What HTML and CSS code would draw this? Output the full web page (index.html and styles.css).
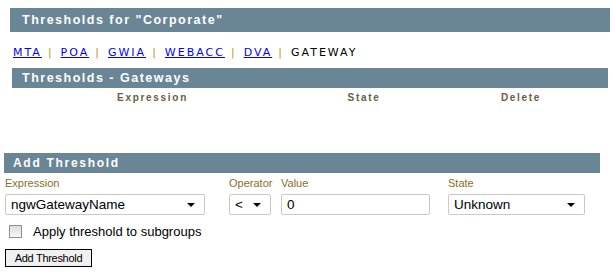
FILE: index.html
```html
<!DOCTYPE html>
<html lang="en">
<head>
  <meta charset="UTF-8" />
  <title>Thresholds</title>
  <link rel="stylesheet" href="styles.css">
</head>
<body>
  <div class="bar title">Thresholds for "Corporate"</div>

  <div class="tabs">
    <a href="#">MTA</a><span class="sep">|</span><a href="#">POA</a><span class="sep">|</span><a href="#">GWIA</a><span class="sep">|</span><a href="#">WEBACC</a><span class="sep">|</span><a href="#">DVA</a><span class="sep">|</span><span class="current">GATEWAY</span>
  </div>

  <div class="bar sub">Thresholds - Gateways</div>
  <div class="cols">
    <span>Expression</span>
    <span>State</span>
    <span>Delete</span>
  </div>

  <div class="bar add">Add Threshold</div>
  <div class="form">
    <div class="field f-expr">
      <label>Expression</label>
      <div class="select wide"><span>ngwGatewayName</span><i></i></div>
    </div>
    <div class="field f-op">
      <label>Operator</label>
      <div class="select op"><span>&lt;</span><i></i></div>
    </div>
    <div class="field f-val">
      <label>Value</label>
      <div class="input">0</div>
    </div>
    <div class="field f-state">
      <label>State</label>
      <div class="select state"><span>Unknown</span><i></i></div>
    </div>
  </div>
  <div class="check">
    <span class="box"></span>
    <span>Apply threshold to subgroups</span>
  </div>
  <button class="btn">Add Threshold</button>
</body>
</html>
```

FILE: styles.css
```css
body {
  margin: 0;
  background: #fff;
  font-family: 'Liberation Sans', Arial, sans-serif;
  width: 615px;
}
.bar {
  background: #6a8696;
  color: #fff;
  font-weight: bold;
  letter-spacing: 1.5px;
  box-sizing: border-box;
}
.title {
  margin: 8px 5px 0 10px;
  height: 24px; line-height: 24px;
  padding-left: 12px;
  font-size: 12.5px;
}
.tabs {
  margin: 14px 0 0 13px;
  height: 22px;
  font-family: 'DejaVu Sans', Verdana, sans-serif;
  font-size: 11px;
  letter-spacing: 2px;
}
.tabs a { color: #00f; }
.tabs .sep { color: #d08b2a; margin: 0 7px 0 6px; }
.tabs .current { color: #000; }
.sub {
  margin: 0 7px 0 12px;
  height: 20px; line-height: 20px;
  padding-left: 10px;
  font-size: 12.5px;
}
.cols {
  display: grid;
  grid-template-columns: 305px 118px 196px;
  height: 65px;
  font-size: 10px;
  font-weight: bold;
  letter-spacing: 1.7px;
  color: #6b5d3f;
  padding-top: 4px;
  box-sizing: border-box;
  text-align: center;
}
.add {
  margin: 0 15px 0 4px;
  height: 20px; line-height: 20px;
  padding-left: 9px;
  font-size: 12px;
  letter-spacing: 1.7px;
}
.form {
  display: flex;
  padding-left: 5px;
}
.field label {
  display: block;
  font-size: 11px;
  color: #8a6d2a;
  height: 21px;
  line-height: 21px;
}
.f-expr { width: 224px; }
.f-op { width: 52px; }
.f-val { width: 167px; }
.select, .input {
  box-sizing: border-box;
  height: 21px;
  border: 1px solid #c9c9c9;
  border-radius: 2px;
  display: flex;
  align-items: center;
  padding: 0 5px;
  font-size: 13.5px;
  color: #000;
}
.select span { flex: 1; }
.select i {
  width: 0; height: 0;
  border-left: 4px solid transparent;
  border-right: 4px solid transparent;
  border-top: 4px solid #000;
  margin-right: 4px;
}
.wide { width: 200px; }
.op { width: 42px; }
.input { width: 149px; }
.state { width: 137px; }
.check {
  display: flex;
  align-items: center;
  margin: 9px 0 0 9px;
  height: 15px;
  font-size: 13px;
  color: #000;
}
.box {
  width: 11px; height: 11px;
  border: 1px solid #8f8f8f;
  background: linear-gradient(#dcdcdc, #f8f8f8);
  margin-right: 11px;
}
.btn {
  display: block;
  margin: 10px 0 0 5px;
  width: 87px; height: 18px;
  padding: 0;
  border: 1px solid #000;
  background: #f0f0f0;
  font-family: 'Liberation Sans', Arial, sans-serif;
  font-size: 11px;
  letter-spacing: -0.3px;
}
```
